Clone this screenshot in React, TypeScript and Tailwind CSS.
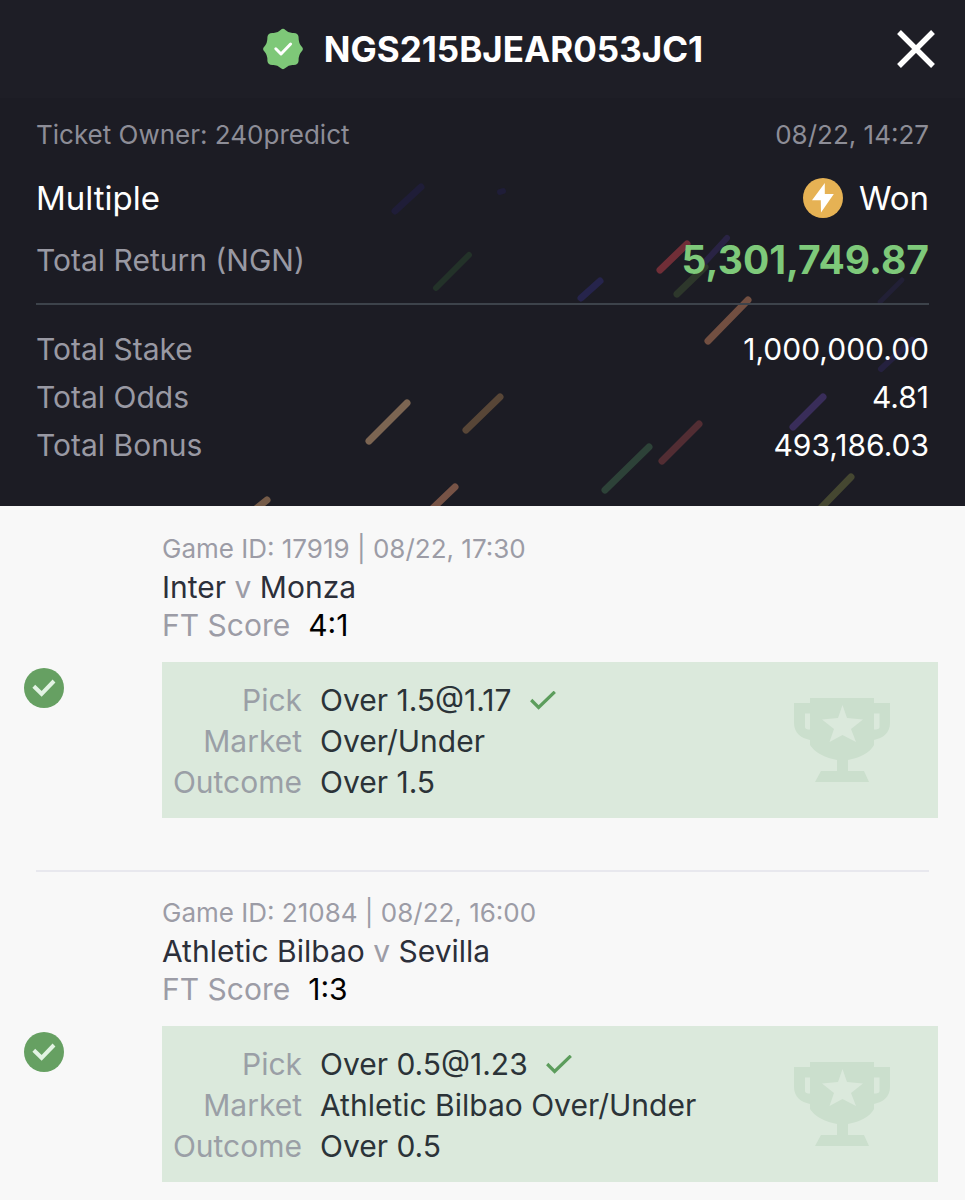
import { Fragment } from "react";

type Match = {
  id: string;
  time: string;
  home: string;
  away: string;
  score: string;
  pick: string;
  market: string;
  outcome: string;
};

const matches: Match[] = [
  {
    id: "17919",
    time: "08/22, 17:30",
    home: "Inter",
    away: "Monza",
    score: "4:1",
    pick: "Over 1.5@1.17",
    market: "Over/Under",
    outcome: "Over 1.5",
  },
  {
    id: "21084",
    time: "08/22, 16:00",
    home: "Athletic Bilbao",
    away: "Sevilla",
    score: "1:3",
    pick: "Over 0.5@1.23",
    market: "Athletic Bilbao Over/Under",
    outcome: "Over 0.5",
  },
];

const totals = [
  { label: "Total Stake", value: "1,000,000.00" },
  { label: "Total Odds", value: "4.81" },
  { label: "Total Bonus", value: "493,186.03" },
];

// x1, y1, x2, y2, colour, stroke width
const streaks: [number, number, number, number, string, number][] = [
  [395, 211, 421, 187, "#1f1d38", 7],
  [500, 192, 503, 191, "#1f1d38", 6],
  [436, 288, 469, 255, "#233229", 6],
  [581, 298, 600, 281, "#26244c", 7],
  [369, 441, 407, 403, "#7c6552", 7],
  [466, 430, 500, 397, "#584637", 7],
  [433, 508, 455, 487, "#775346", 7],
  [257, 508, 267, 500, "#755b48", 7],
  [605, 490, 649, 447, "#2d4238", 7],
  [662, 461, 699, 424, "#522d33", 7],
  [660, 270, 687, 244, "#702e37", 7],
  [677, 294, 705, 267, "#2d372b", 7],
  [705, 262, 727, 238, "#292344", 6],
  [708, 341, 748, 300, "#724f41", 7],
  [793, 427, 823, 397, "#392d5a", 7],
  [881, 369, 912, 340, "#25213f", 6],
  [880, 302, 902, 280, "#222036", 5],
  [821, 508, 851, 477, "#454731", 7],
];

function Confetti() {
  return (
    <svg
      className="pointer-events-none absolute inset-0 h-full w-full"
      viewBox="0 0 965 506"
      preserveAspectRatio="xMaxYMax slice"
      strokeLinecap="round"
      aria-hidden="true"
    >
      {streaks.map(([x1, y1, x2, y2, color, width]) => (
        <line key={`${x1}-${y1}`} x1={x1} y1={y1} x2={x2} y2={y2} stroke={color} strokeWidth={width} />
      ))}
    </svg>
  );
}

function VerifiedBadge() {
  return (
    <svg className="size-[42px] shrink-0" viewBox="0 0 42 42" aria-hidden="true">
      <path
        d="M18.6 1.9 Q21 -0.400 23.4 1.9 Q26.8 5.400 31.2 5 Q36 4.800 36.6 9 Q36.400 15 39.6 18.400 Q42.200 21 39.6 23.600 Q36.400 27 36.6 33 Q36 37.200 31.2 37 Q26.8 36.600 23.4 40.1 Q21 42.400 18.6 40.1 Q15.200 36.600 10.8 37 Q6 37.200 5.4 33 Q5.600 27 2.4 23.600 Q-0.200 21 2.4 18.400 Q5.600 15 5.4 9 Q6 4.800 10.8 5 Q15.200 5.400 18.6 1.9 Z"
        fill="#7ec878"
      />
      <path d="M13.8 20.800 L19 26 L28.6 16" fill="none" stroke="#fff" strokeWidth="3" strokeLinecap="round" strokeLinejoin="round" />
    </svg>
  );
}

function BoltIcon() {
  return (
    <svg className="size-10" viewBox="0 0 40 40" aria-hidden="true">
      <circle cx="20" cy="20" r="20" fill="#e6b254" />
      <path d="M21.8 5 L9 22.3 H17.8 L18 34.5 L30.8 16 H21.8 Z" fill="#fff" />
    </svg>
  );
}

function WonIcon() {
  return (
    <svg className="mt-1.5 size-10 shrink-0" viewBox="0 0 40 40" role="img" aria-label="Won">
      <circle cx="20" cy="20" r="20" fill="#66a062" />
      <path d="M9.8 18.2 L17.6 25.8 L30 13" fill="none" stroke="#e2f3e3" strokeWidth="4" />
    </svg>
  );
}

function TickIcon() {
  return (
    <svg className="h-5 w-[26px] shrink-0" viewBox="0 0 26 20" fill="none" aria-hidden="true">
      <path d="M1.2 9 L8.6 16.4 L24.8 0.8" stroke="#5c9d5c" strokeWidth="3.2" />
    </svg>
  );
}

function Trophy() {
  return (
    <svg className="h-[84px] w-24 shrink-0" viewBox="0 0 96 84" fill="#cbdfcd" aria-hidden="true">
      <path
        fillRule="evenodd"
        d="M16 0 H80 V5 H96 V25 C96 35 89 40 80 42 V47 C76 55 65 60 54 62 V73 H70 L75 84 H21 L27 73 H43 V62 C32 60 21 55 16 47 V42 C7 40 0 35 0 25 V5 H16 Z M16 15.500 H11 V29 C11 31 13 31.500 16 31.500 Z M80 15.500 V31.500 C83 31.500 85.500 31 85.500 29 V15.500 Z M48.500 7 L44 20 L28 21.500 L40 31 L35.500 44 L48.500 37 L62 44 L57 31 L69 21.500 L53 20 Z"
      />
    </svg>
  );
}

function MatchItem({ match }: { match: Match }) {
  const rows = [
    { label: "Pick", value: match.pick },
    { label: "Market", value: match.market },
    { label: "Outcome", value: match.outcome },
  ];

  return (
    <li className="group">
      <div className="pt-[22px] pr-[27px] pl-[162px] leading-[38px]">
        <p className="text-[26px] text-[#9c9ca6]">
          Game ID: {match.id} | {match.time}
        </p>
        <h2 className="text-[30px] text-[#2c2f3a]">
          {match.home} <span className="text-[#9c9ca6]">v</span> {match.away}
        </h2>
        <p className="flex gap-[18px] text-[30px]">
          <span className="text-[#9c9ca6]">FT Score</span>
          <span className="text-black">{match.score}</span>
        </p>
      </div>

      <div className="mt-[18px] flex items-start pr-[27px] pl-6">
        <WonIcon />
        <div className="ml-[98px] flex flex-1 items-center justify-between bg-[#dbe9dc] pr-12">
          <dl className="grid grid-cols-[140px_auto] gap-x-[18px] pt-[18px] pb-[15px] text-[30px] leading-[41px]">
            {rows.map((row) => (
              <Fragment key={row.label}>
                <dt className="text-right text-[#9a9fa6]">{row.label}</dt>
                <dd className="flex items-center gap-[18px] text-[#2b3338]">
                  {row.value}
                  {row.label === "Pick" && <TickIcon />}
                </dd>
              </Fragment>
            ))}
          </dl>
          <Trophy />
        </div>
      </div>

      <div className="mx-9 mt-[52px] h-0.5 bg-[#e8e8ee] group-last:hidden" />
    </li>
  );
}

export default function App() {
  return (
    <div className="min-h-screen bg-[#f8f8f8] font-['Inter',sans-serif]">
      <header className="relative overflow-hidden bg-[#1c1c24] text-white">
        <Confetti />

        <div className="relative flex h-[98px] items-center justify-center gap-5 bg-[#1e1e26]">
          <VerifiedBadge />
          <h1 className="text-[35px] font-bold">NGS215BJEAR053JC1</h1>
          <button type="button" aria-label="Close" className="absolute right-7 cursor-pointer">
            <svg className="size-[42px]" viewBox="0 0 42 42" stroke="#fff" strokeWidth="5.4" aria-hidden="true">
              <path d="M4 4 L38 38 M38 4 L4 38" />
            </svg>
          </button>
        </div>

        <div className="relative px-9 pt-4 pb-[37px]">
          <div className="flex flex-col gap-[22px]">
            <div className="flex justify-between text-[26px] leading-[42px] text-[#8d8d97]">
              <span>Ticket Owner: 240predict</span>
              <span>08/22, 14:27</span>
            </div>
            <div className="flex justify-between text-[33px] leading-10">
              <span>Multiple</span>
              <span className="flex items-center gap-4">
                <BoltIcon />
                Won
              </span>
            </div>
            <div className="flex justify-between leading-10">
              <span className="text-[30px] text-[#9999a3]">Total Return (NGN)</span>
              <strong className="text-[39px] font-bold text-[#7ec97a]">5,301,749.87</strong>
            </div>
          </div>

          <div className="mt-[23px] h-0.5 bg-[#3d434b]" />

          <dl className="mt-5 text-[30px] leading-[48px]">
            {totals.map((row) => (
              <div key={row.label} className="flex justify-between">
                <dt className="text-[#9999a3]">{row.label}</dt>
                <dd>{row.value}</dd>
              </div>
            ))}
          </dl>
        </div>
      </header>

      <ul className="pt-0.5 pb-5">
        {matches.map((match) => (
          <MatchItem key={match.id} match={match} />
        ))}
      </ul>
    </div>
  );
}
